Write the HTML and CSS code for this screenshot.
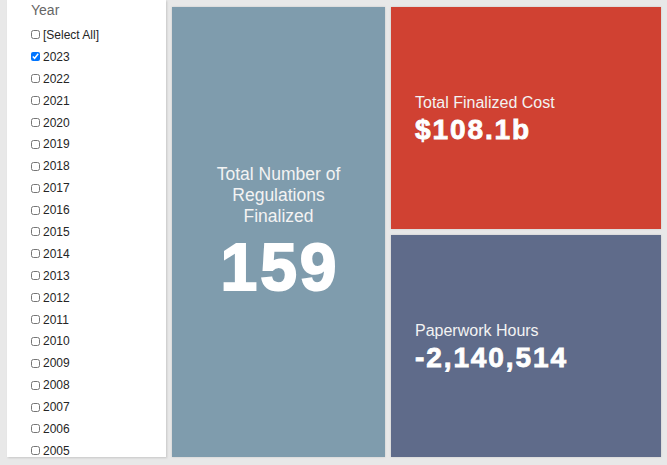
FILE: index.html
```html
<!DOCTYPE html>
<html>
<head>
<meta charset="utf-8">
<link rel="stylesheet" href="styles.css">
</head>
<body>
<div class="dash">
  <div class="slicer">
    <div class="slicer-title">Year</div>
    <ul class="slicer-list">
      <li><input type="checkbox"><span>[Select All]</span></li>
      <li><input type="checkbox" checked><span>2023</span></li>
      <li><input type="checkbox"><span>2022</span></li>
      <li><input type="checkbox"><span>2021</span></li>
      <li><input type="checkbox"><span>2020</span></li>
      <li><input type="checkbox"><span>2019</span></li>
      <li><input type="checkbox"><span>2018</span></li>
      <li><input type="checkbox"><span>2017</span></li>
      <li><input type="checkbox"><span>2016</span></li>
      <li><input type="checkbox"><span>2015</span></li>
      <li><input type="checkbox"><span>2014</span></li>
      <li><input type="checkbox"><span>2013</span></li>
      <li><input type="checkbox"><span>2012</span></li>
      <li><input type="checkbox"><span>2011</span></li>
      <li><input type="checkbox"><span>2010</span></li>
      <li><input type="checkbox"><span>2009</span></li>
      <li><input type="checkbox"><span>2008</span></li>
      <li><input type="checkbox"><span>2007</span></li>
      <li><input type="checkbox"><span>2006</span></li>
      <li><input type="checkbox"><span>2005</span></li>
    </ul>
  </div>
  <div class="tile tile-blue">
    <div class="tile-label center">Total Number of<br>Regulations<br>Finalized</div>
    <div class="big-num">159</div>
  </div>
  <div class="right-col">
    <div class="tile tile-red">
      <div class="tile-label">Total Finalized Cost</div>
      <div class="mid-num">$108.1b</div>
    </div>
    <div class="tile tile-slate">
      <div class="tile-label">Paperwork Hours</div>
      <div class="mid-num">-2,140,514</div>
    </div>
  </div>
</div>
</body>
</html>
```
FILE: styles.css
```css
html, body {
  margin: 0;
  padding: 0;
  width: 667px;
  height: 465px;
  overflow: hidden;
  background: #e8e8e8;
  font-family: "Liberation Sans", Arial, sans-serif;
}
.dash {
  display: grid;
  grid-template-columns: 159px 213px 270px;
  column-gap: 6px;
  padding-left: 7px;
  height: 457px;
}
.slicer {
  background: #ffffff;
  height: 457px;
  overflow: hidden;
  box-shadow: 1px 1px 2px rgba(0,0,0,0.15);
}
.slicer-title {
  color: #666666;
  font-size: 14px;
  padding-left: 24px;
  margin-top: 1px;
  line-height: 18px;
}
.slicer-list {
  list-style: none;
  margin: 5px 0 0 0;
  padding: 0 0 0 24px;
}
.slicer-list li {
  display: flex;
  align-items: center;
  height: 21.9px;
  font-size: 12px;
  color: #252525;
}
.slicer-list input {
  width: 9px;
  height: 9px;
  margin: 0 3px 0 0;
}
.tile {
  margin-top: 7px;
  color: #ffffff;
  box-shadow: 0 0 2px rgba(0,0,0,0.15);
}
.tile-blue {
  background: #7f9cad;
  height: 450px;
  display: flex;
  flex-direction: column;
  align-items: center;
  justify-content: center;
  padding-top: 2px;
  box-sizing: border-box;
}
.tile-label {
  font-size: 17.5px;
  line-height: 21px;
  color: #f3f3f3;
}
.tile-label.center {
  text-align: center;
}
.big-num {
  font-size: 66px;
  font-weight: bold;
  line-height: 72px;
  margin-top: 4px;
  letter-spacing: 3px;
  padding-left: 3px;
  -webkit-text-stroke: 2px #ffffff;
  text-shadow: 0 0 1px rgba(0,0,0,0.25);
}
.right-col {
  display: flex;
  flex-direction: column;
  gap: 6px;
  margin-top: 7px;
  height: 450px;
}
.right-col .tile {
  margin-top: 0;
  flex: 1;
  display: flex;
  flex-direction: column;
  justify-content: center;
  padding-left: 24px;
  padding-top: 4px;
  box-sizing: border-box;
}
.tile-red { background: #d04132; }
.tile-slate { background: #5f6b8a; }
.right-col .tile-label {
  font-size: 16px;
  line-height: 18px;
}
.mid-num {
  font-size: 28px;
  font-weight: bold;
  line-height: 32px;
  margin-top: 2px;
  letter-spacing: 1.9px;
  -webkit-text-stroke: 0.9px #ffffff;
  text-shadow: 0 0 1px rgba(0,0,0,0.5);
}
```
